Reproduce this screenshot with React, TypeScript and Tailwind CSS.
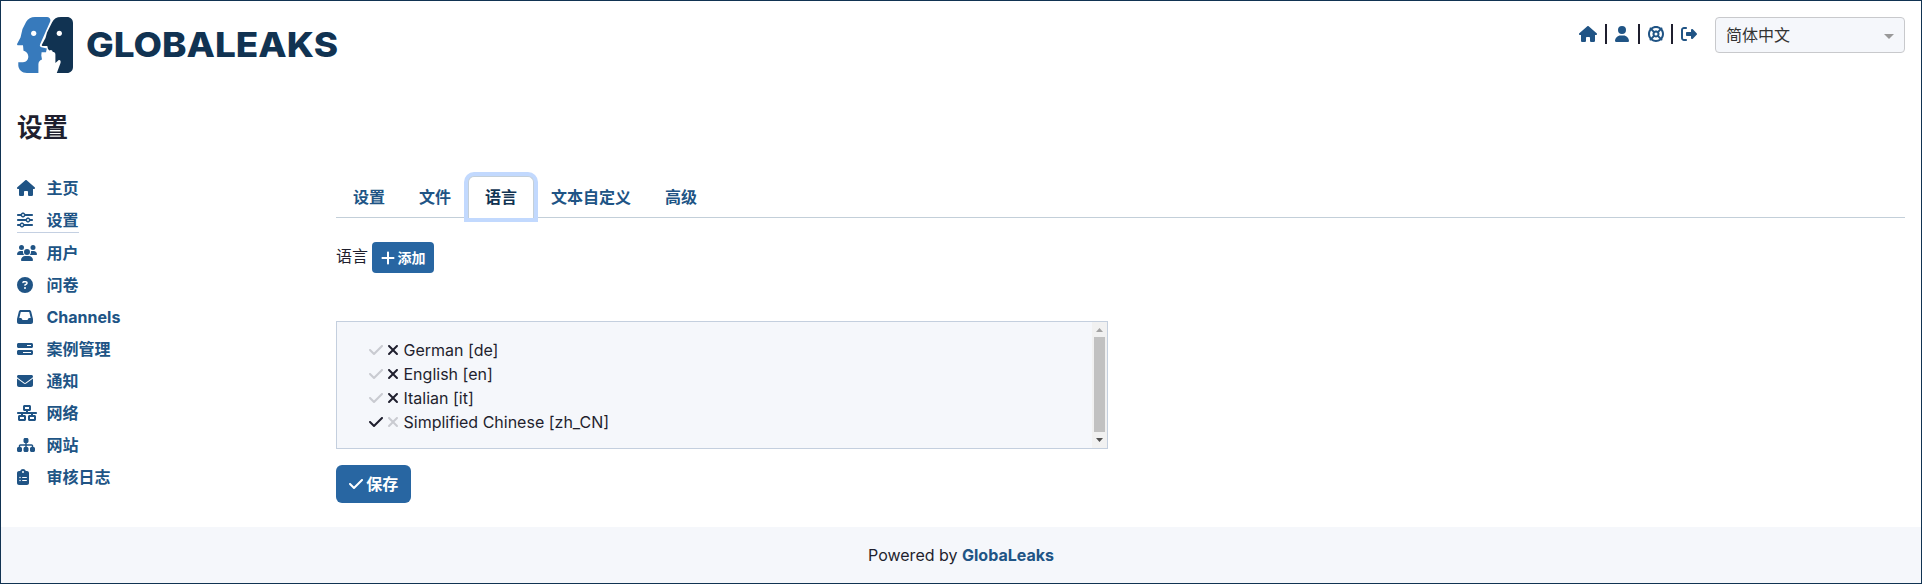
import React from "react";
import type { IconType } from "react-icons";
import {
  FaHouse,
  FaUser,
  FaLifeRing,
  FaRightFromBracket,
  FaSliders,
  FaUsers,
  FaCircleQuestion,
  FaInbox,
  FaBarsProgress,
  FaEnvelope,
  FaNetworkWired,
  FaSitemap,
  FaClipboardList,
  FaPlus,
  FaCheck,
  FaXmark,
} from "react-icons/fa6";

type NavItem = { label: string; icon: IconType; width: string; active?: boolean };

const navItems: NavItem[] = [
  { label: "主页", icon: FaHouse, width: "w-[18px]" },
  { label: "设置", icon: FaSliders, width: "w-4", active: true },
  { label: "用户", icon: FaUsers, width: "w-5" },
  { label: "问卷", icon: FaCircleQuestion, width: "w-4" },
  { label: "Channels", icon: FaInbox, width: "w-4" },
  { label: "案例管理", icon: FaBarsProgress, width: "w-4" },
  { label: "通知", icon: FaEnvelope, width: "w-4" },
  { label: "网络", icon: FaNetworkWired, width: "w-5" },
  { label: "网站", icon: FaSitemap, width: "w-[18px]" },
  { label: "审核日志", icon: FaClipboardList, width: "w-3" },
];

const tabs = ["设置", "文件", "语言", "文本自定义", "高级"];
const activeTab = "语言";

const languages = [
  { name: "German [de]", isDefault: false },
  { name: "English [en]", isDefault: false },
  { name: "Italian [it]", isDefault: false },
  { name: "Simplified Chinese [zh_CN]", isDefault: true },
];

function Logo() {
  return (
    <svg className="block h-14 w-[322px]" viewBox="0 0 322 56">
      <path
        fill="#377abc"
        d="M18 0H30C32.500 0 34 2.200 33.200 4.500L23 27.500C22.500 29 23.300 30 24.500 30.300L29.800 31.500L29 35.200H24.600L24.300 38.500L25 42.500C22.500 43.500 21.400 45 21.400 47.500V56H10C5 56 1.500 52.500 1.300 48.500V45.300H6C9.300 45.300 11.300 42.800 11.300 39.600C11.300 36.500 9 34.300 6.500 33.800L6 28.200H0.800C0 28.200 -0.100 27.400 0.300 26.600L3.500 20.500L5.500 12L9.200 4.800C11 1.800 14 0 18 0Z"
      />
      <path
        fill="#113352"
        d="M44 0H50C53.500 0 56 2.500 56 6V50C56 53.500 53.500 56 50 56H39.800L43.500 46C44.200 43.300 42.500 42.300 41.200 43.500L38.400 46V37.500C38.400 35.500 37.300 34.700 35.800 35L35.300 33.800C34.500 32.600 33.200 32.800 32.500 33.600L31 32L30.300 28.900H25.600C24.800 28.900 24.600 28.200 25 27.500L28.500 21L30 15.500L35 5.500C37 1.800 39.500 0 44 0Z"
      />
      <circle cx="16.700" cy="16.300" r="2.600" fill="#fff" />
      <circle cx="42.300" cy="16.300" r="2.600" fill="#fff" />
      <text
        x="69"
        y="40"
        textLength="252"
        lengthAdjust="spacingAndGlyphs"
        fill="#113352"
        fontSize="34.500"
        fontWeight="800"
        className="font-[Inter,sans-serif]"
      >
        GLOBALEAKS
      </text>
    </svg>
  );
}

function Separator() {
  return <span className="mx-[7px] h-5 w-[2px] bg-[#1f1f2e]" />;
}

function Header() {
  return (
    <header className="flex h-[91px] items-start justify-between px-4 pt-4">
      <Logo />
      <div className="flex items-start">
        <nav className="mt-[7px] mr-[18px] flex h-5 items-center text-[#205485]">
          <FaHouse className="mr-px h-4 w-[18px]" />
          <Separator />
          <FaUser className="mr-[2px] ml-px h-4 w-[14px]" />
          <Separator />
          <FaLifeRing className="ml-px size-4" />
          <Separator />
          <FaRightFromBracket className="ml-px size-4" />
        </nav>
        <div className="flex h-9 w-[190px] items-center justify-between rounded border border-[#c8c9cc] bg-[#f5f7fb] pr-[10px] pl-[10px] text-[#333]">
          <span>简体中文</span>
          <svg className="mt-[2px] h-[5px] w-[10px]" viewBox="0 0 10 5">
            <path d="M0 0H10L5 5Z" fill="#999" />
          </svg>
        </div>
      </div>
    </header>
  );
}

function Sidebar() {
  return (
    <ul className="w-[319px] shrink-0 font-bold text-[#205485]">
      {navItems.map(({ label, icon: Icon, width, active }) => (
        <li key={label} className={`flex items-start pt-[3px] ${active ? "h-[33px]" : "h-8"}`}>
          <a className={`flex h-[26px] items-center border-b ${active ? "border-[#c4d0e2]" : "border-transparent"}`}>
            <span className="flex w-[29.5px]">
              <Icon className={`h-4 ${width}`} />
            </span>
            {label}
          </a>
        </li>
      ))}
    </ul>
  );
}

function Tabs() {
  return (
    <div className="flex h-[42px] border-b border-[#c3cfd9]">
      {tabs.map((tab) =>
        tab === activeTab ? (
          <button
            key={tab}
            className="relative h-[42px] rounded-t-md border border-b-0 border-[#c3cfd9] bg-white px-4 pb-px font-semibold text-[#113352] ring-4 ring-[#c2d9fe]"
          >
            {tab}
          </button>
        ) : (
          <button key={tab} className="h-[42px] border border-transparent px-4 font-semibold text-[#205485]">
            {tab}
          </button>
        ),
      )}
    </div>
  );
}

function LanguageList() {
  return (
    <div className="mt-12 flex h-32 w-[772px] justify-between border border-[#c4cfde] bg-[#f5f7fb]">
      <ul className="pt-4 pl-8">
        {languages.map(({ name, isDefault }) => (
          <li key={name} className="flex h-6 items-center">
            <FaCheck className={`mr-1 h-4 w-[14px] ${isDefault ? "" : "opacity-20"}`} />
            <FaXmark className={`mr-[4.5px] h-4 w-3 ${isDefault ? "opacity-20" : ""}`} />
            {name}
          </li>
        ))}
      </ul>
      <div className="flex w-[15px] flex-col items-center bg-[#f1f1f1]">
        <svg className="h-[15px] w-[15px]" viewBox="0 0 15 15">
          <path d="M4 10L7.500 6L11 10Z" fill="#a3a3a3" />
        </svg>
        <div className="h-[95px] w-[11px] bg-[#c1c1c1]" />
        <svg className="mt-px h-[15px] w-[15px]" viewBox="0 0 15 15">
          <path d="M4 5L7.500 9L11 5Z" fill="#505050" />
        </svg>
      </div>
    </div>
  );
}

export default function App() {
  return (
    <div className="flex h-[584px] flex-col border border-[#113352] bg-white font-[Inter,'Noto_Sans_CJK_SC',sans-serif] text-base text-[#1f1f2e]">
      <Header />
      <h1 className="mt-[17px] ml-4 h-[38px] text-[25.6px] leading-[38px] font-semibold">设置</h1>
      <div className="mt-[25px] flex px-4">
        <Sidebar />
        <main className="mt-1 flex-1">
          <Tabs />
          <div className="mt-6 flex h-[31px] items-start gap-1">
            <span className="pt-[2px] leading-6">语言</span>
            <button className="flex h-[31px] w-[62px] items-center justify-center gap-[3px] rounded bg-[#2866a2] text-sm font-semibold text-white">
              <FaPlus className="h-4 w-[14px]" />
              添加
            </button>
          </div>
          <LanguageList />
          <button className="mt-4 flex h-[38px] w-[75px] items-center justify-center gap-[3.5px] rounded-md bg-[#2866a2] font-semibold text-white">
            <FaCheck className="h-4 w-[14px]" />
            保存
          </button>
        </main>
      </div>
      <footer className="mt-auto flex h-14 items-center justify-center bg-[#f5f7fb]">
        <span>
          Powered by <a className="font-bold text-[#205485]">GlobaLeaks</a>
        </span>
      </footer>
    </div>
  );
}
